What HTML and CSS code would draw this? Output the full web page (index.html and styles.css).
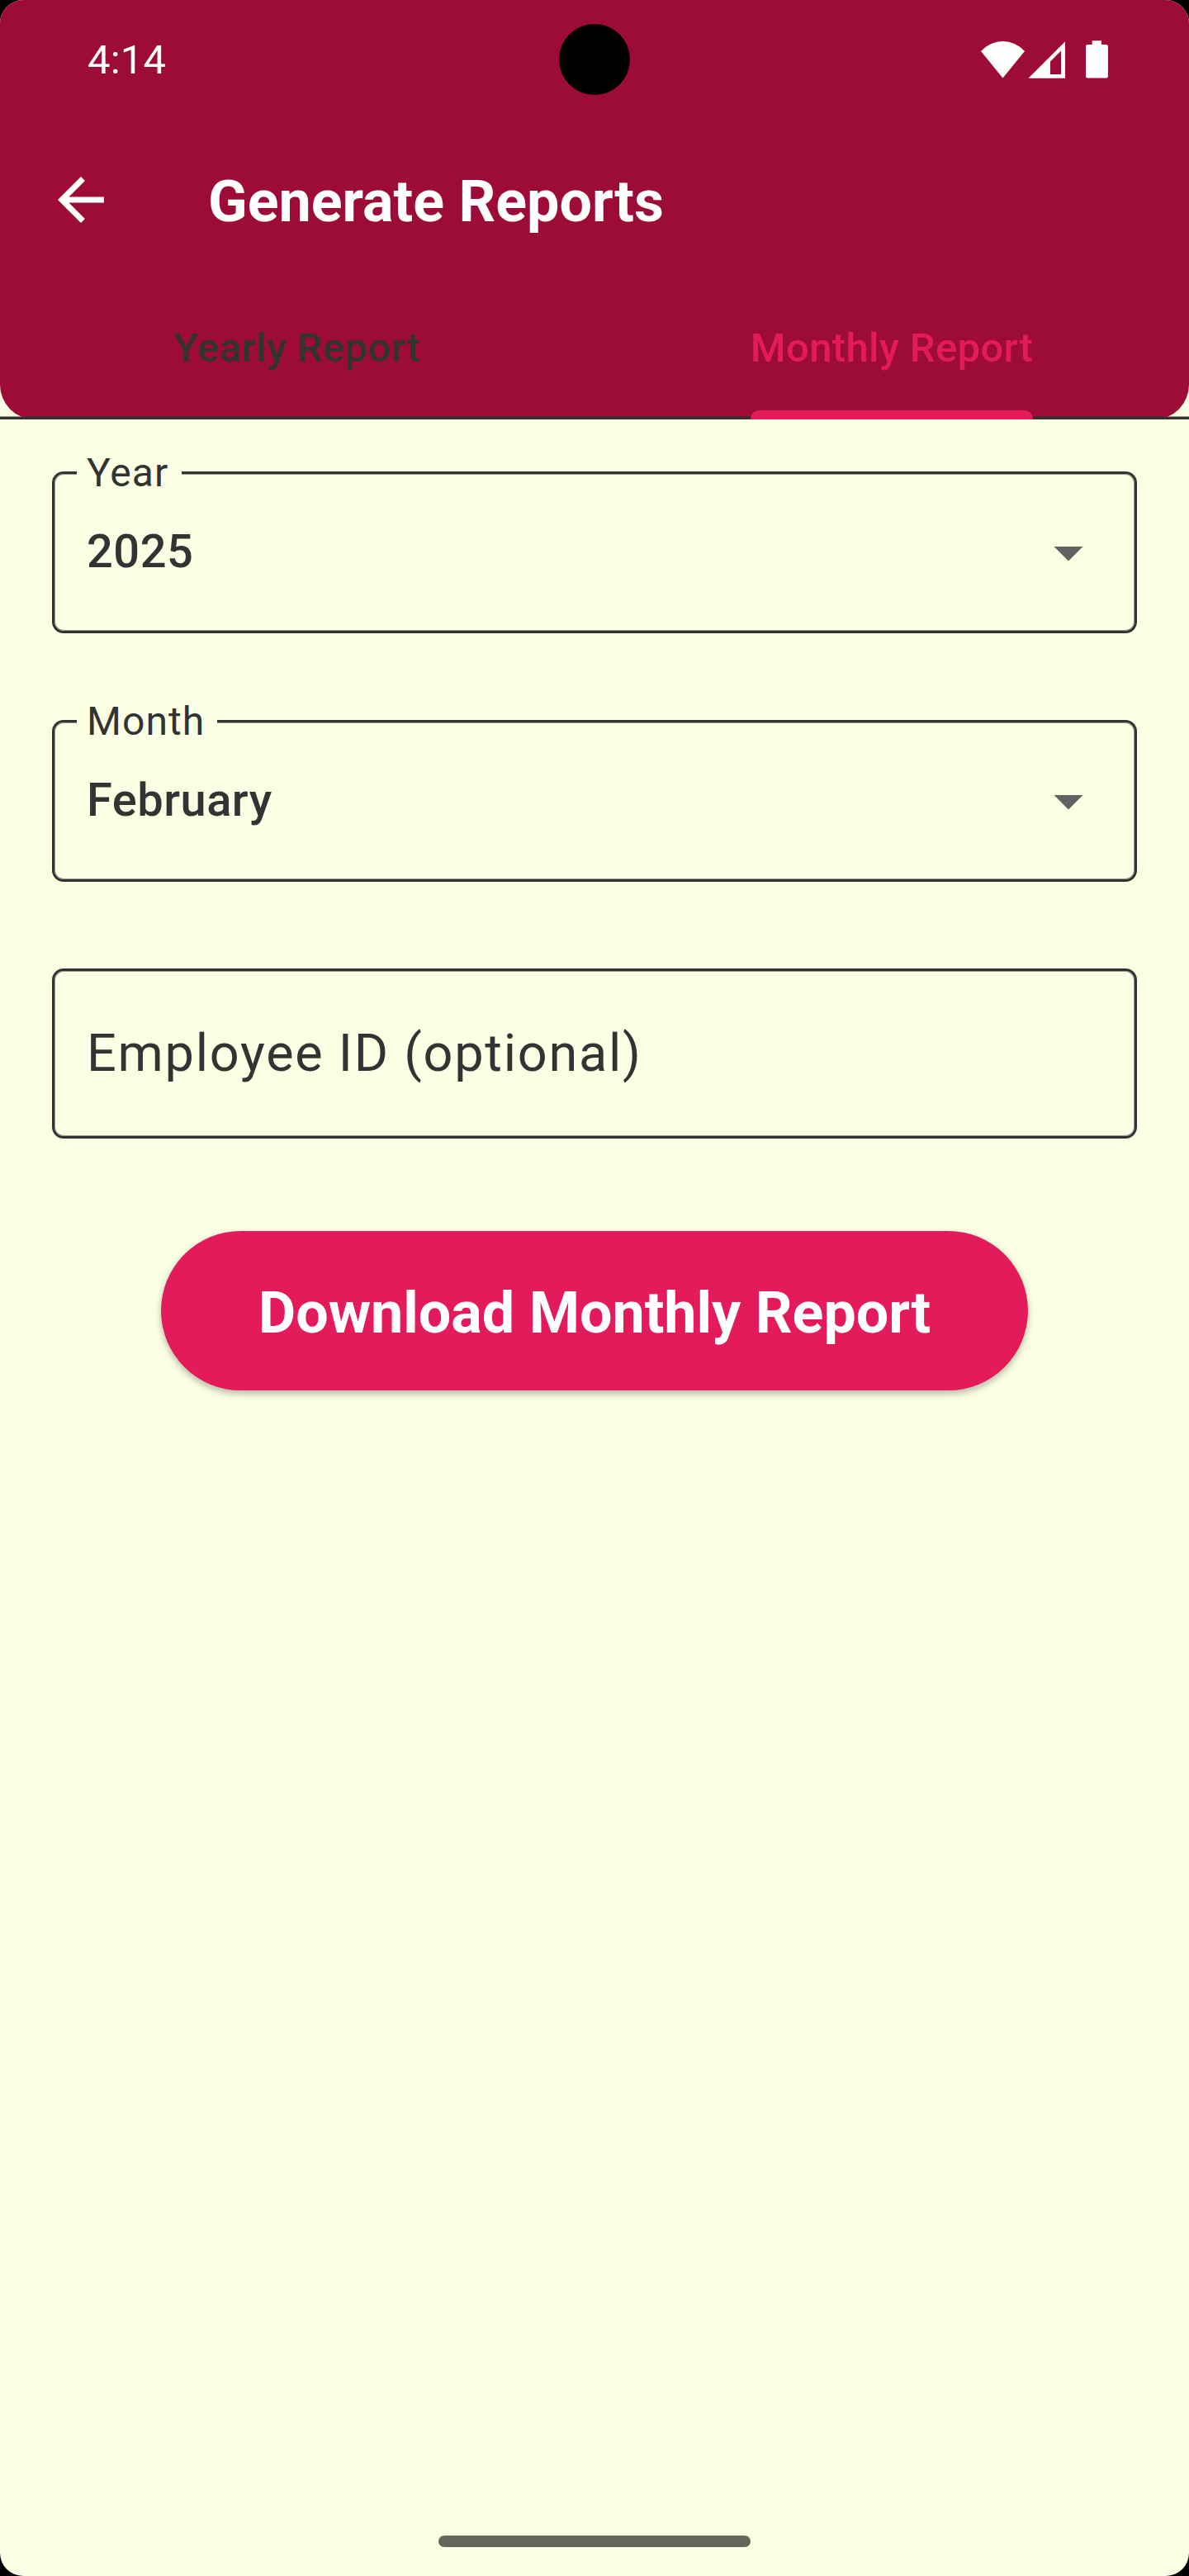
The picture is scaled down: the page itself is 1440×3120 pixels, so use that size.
FILE: index.html
```html
<!DOCTYPE html>
<html lang="en">
<head>
<meta charset="utf-8">
<title>Generate Reports</title>
<link rel="stylesheet" href="styles.css">
</head>
<body>
<div class="screen">
  <header class="header">
    <div class="status-bar">
      <span class="clock">4:14</span>
      <span class="camera"></span>
      <svg class="status-icons" width="160" height="50" viewBox="0 0 160 50" fill="#fff">
        <path d="M26.500 46.500 0 14A35.300 35.300 0 0 1 53 14Z"/>
        <path fill-rule="evenodd" d="M57.500 46.700 102 2.300V46.700ZM84 26.500V42H97V13.500Z"/>
        <path d="M134.700 1.300h11.300v4.700h5.500a2.500 2.500 0 0 1 2.500 2.500v35.500a2.500 2.500 0 0 1-2.500 2.500h-22a2.500 2.500 0 0 1-2.500-2.500v-35.500a2.500 2.500 0 0 1 2.500-2.500h5.200z"/>
      </svg>
    </div>
    <div class="toolbar">
      <svg class="back" width="84" height="84" viewBox="0 0 24 24" fill="#fff"><path d="M20 11H7.830l5.590-5.590L12 4l-8 8 8 8 1.410-1.410L7.830 13H20v-2z"/></svg>
      <h1 class="title">Generate Reports</h1>
    </div>
    <nav class="tabs">
      <div class="tab"><span class="tab-label">Yearly Report</span></div>
      <div class="tab tab-active"><span class="tab-label">Monthly Report</span></div>
    </nav>
  </header>
  <main class="form">
    <div class="field">
      <span class="label label-year">Year</span>
      <span class="value">2025</span>
      <svg class="caret" width="84" height="84" viewBox="0 0 24 24" fill="#616161"><path d="M7 10l5 5 5-5z"/></svg>
    </div>
    <div class="field">
      <span class="label label-month">Month</span>
      <span class="value">February</span>
      <svg class="caret" width="84" height="84" viewBox="0 0 24 24" fill="#616161"><path d="M7 10l5 5 5-5z"/></svg>
    </div>
    <div class="field field-input"><span class="hint">Employee ID (optional)</span></div>
    <button class="download">Download Monthly Report</button>
  </main>
  <div class="nav-bar"><div class="handle"></div></div>
</div>
</body>
</html>
```
FILE: styles.css
```css
* { box-sizing: border-box; }
body {
  margin: 0;
  background: #000;
  font-family: Roboto, sans-serif;
  color: #333;
}
.screen {
  width: 1440px;
  height: 3120px;
  display: flex;
  flex-direction: column;
  background: #fbffe3;
  border-radius: 28px;
  overflow: hidden;
}
.header {
  height: 508px;
  display: flex;
  flex-direction: column;
  background: #9d0c36;
  border-radius: 0 0 42px 42px;
}
.status-bar {
  height: 144px;
  padding: 0 98px 0 106px;
  display: grid;
  grid-template-columns: 1fr 86px 1fr;
  align-items: center;
}
.clock {
  margin-top: 1px;
  font-size: 49px;
  line-height: 57px;
  letter-spacing: .2px;
  color: #fff;
}
.camera {
  width: 86px;
  height: 86px;
  margin-left: -4px;
  border-radius: 50%;
  background: #000;
}
.status-icons {
  justify-self: end;
  margin: 2px -6px 0 0;
}
.toolbar {
  height: 196px;
  padding-left: 56px;
  display: flex;
  align-items: center;
}
.title {
  margin: 4px 0 0 112px;
  font-size: 70px;
  line-height: 82px;
  font-weight: 700;
  color: #fff;
}
.tabs {
  height: 168px;
  display: flex;
  border-bottom: 3px solid #333;
  box-shadow: inset 0 -1px rgba(51, 51, 51, .5);
}
.tab {
  flex: 1;
  height: 168px;
  display: flex;
  justify-content: center;
}
.tab-label {
  padding-top: 53px;
  font-size: 49px;
  line-height: 57px;
  font-weight: 500;
  letter-spacing: .35px;
}
.tab-active .tab-label {
  color: #e31b5a;
  display: flex;
  flex-direction: column;
  justify-content: space-between;
}
.tab-active .tab-label::after {
  content: "";
  height: 11px;
  background: #e31b5a;
  border-radius: 10px 10px 0 0;
}
.form {
  flex: 1;
  padding: 63px 63px 0;
  display: flex;
  flex-direction: column;
  gap: 105px;
}
.field {
  position: relative;
  height: 196px;
  padding: 0 39px;
  display: flex;
  align-items: center;
  justify-content: space-between;
  border: 3px solid #333;
  border-radius: 14px;
  box-shadow: inset 0 0 0 1px rgba(51, 51, 51, .5);
}
.label {
  position: absolute;
  left: 27px;
  top: -30px;
  height: 57px;
  padding-left: 12px;
  background: #fbffe3;
  font-size: 48px;
  line-height: 57px;
  letter-spacing: 1.05px;
}
.label-year { width: 127px; }
.label-month { width: 170px; }
.value {
  margin-bottom: 2px;
  font-size: 56px;
  line-height: 66px;
  font-weight: 500;
  letter-spacing: .5px;
}
.caret { margin-right: -1px; }
.field-input { height: 206px; }
.hint {
  font-size: 63px;
  line-height: 74px;
  letter-spacing: 1.75px;
}
.download {
  width: 1050px;
  height: 193px;
  margin-top: 7px;
  padding: 4px 0 0;
  align-self: center;
  border: 0;
  border-radius: 97px;
  background: #e31b5a;
  color: #fff;
  font: 700 70px/82px Roboto, sans-serif;
  box-shadow: 0 4px 8px rgba(0, 0, 0, .28);
}
.nav-bar {
  height: 84px;
  padding-top: 35px;
}
.handle {
  width: 378px;
  height: 14px;
  margin: 0 auto;
  border-radius: 7px;
  background: #64665a;
}
```
